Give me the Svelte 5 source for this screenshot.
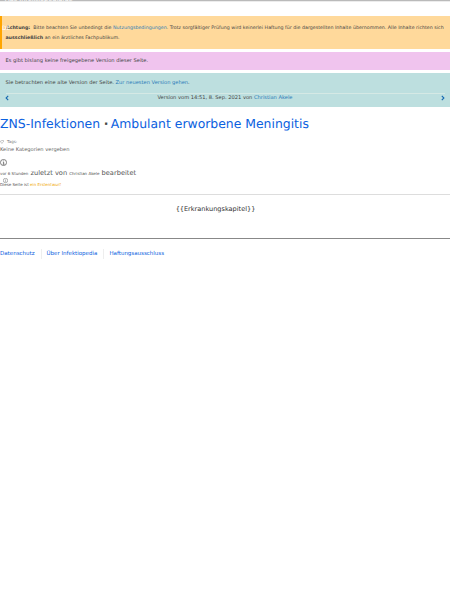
<script lang="ts">
const footerLinks = ['Datenschutz', 'Über Infektiopedia', 'Haftungsausschluss']
</script>

<div class="page">
	<div class="topbar"><span>Aus Infektiopedia.de</span></div>

	<section class="alert warning">
		<span class="ghost">DE</span>
		<p>
			<b>Achtung:</b>&nbsp; Bitte beachten Sie unbedingt die <a href="#nutzung">Nutzungsbedingungen</a>.
			Trotz sorgfältiger Prüfung wird keinerlei Haftung für die dargestellten Inhalte übernommen. Alle
			Inhalte richten sich
		</p>
		<p><b>ausschließlich</b> an ein ärztliches Fachpublikum.</p>
	</section>

	<section class="alert unreleased">Es gibt bislang keine freigegebene Version dieser Seite.</section>

	<section class="alert revision">
		<p>Sie betrachten eine alte Version der Seite. <a href="#neu">Zur neuesten Version gehen</a>.</p>
		<nav>
			<svg viewBox="0 0 4 6"><path d="M3.2 .8 1.1 3l2.1 2.2" /></svg>
			<span>Version vom 14:51, 8. Sep. 2021 von <a href="#autor">Christian Akele</a></span>
			<svg viewBox="0 0 4 6"><path d="M.8 .8 2.9 3 .8 5.2" /></svg>
		</nav>
	</section>

	<h1><a href="#zns">ZNS-Infektionen</a> <b>·</b> <a href="#meningitis">Ambulant erworbene Meningitis</a></h1>

	<div class="tags">
		<svg viewBox="0 0 5 5"><path d="M.4 1.6 2.5.6H4.3V2.3L2.2 4.3Z" /></svg>
		<span>Tags:</span>
	</div>
	<div class="categories">Keine Kategorien vergeben</div>

	<svg class="info" viewBox="0 0 16 16">
		<circle cx="8" cy="8" r="7" />
		<path d="M6.5 7h1.8v5M6.3 12h4M8 3.5v1.5" />
	</svg>

	<div class="edited">
		<small>vor 6 Stunden</small> <span>zuletzt von</span> <small>Christian Akele</small>
		<span>bearbeitet</span>
	</div>
	<div class="state">
		<svg viewBox="0 0 16 16">
			<circle cx="8" cy="8" r="7" />
			<path d="M8 7v5M8 4v1.5" />
		</svg>
		Diese Seite ist <em>ein Erstentwurf</em>
	</div>

	<main>{'{{Erkrankungskapitel}}'}</main>

	<footer>
		{#each footerLinks as link (link)}
			<a href="#{link}">{link}</a>
		{/each}
	</footer>
</div>

<style>
:global(body) {
	margin: 0;
	background: #fff;
}

.page {
	width: 450px;
	height: 600px;
	overflow: hidden;
	font: 5.13px/10px 'DejaVu Sans', sans-serif;
	text-rendering: geometricPrecision;
	color: #444;
	white-space: nowrap;
}

p,
h1 {
	margin: 0;
}

a {
	color: #2a7ab8;
	text-decoration: none;
}

svg {
	display: block;
	fill: none;
	stroke: currentColor;
}

.topbar {
	box-sizing: border-box;
	height: 2px;
	margin-bottom: 14px;
	overflow: hidden;
	background: linear-gradient(#bababa 1px, #ececec 1px);
	color: #fff;
}

.topbar span {
	display: block;
	margin-top: -6px;
	padding-left: 5px;
	font-size: 6.6px;
}

.alert {
	box-sizing: border-box;
	padding-left: 5.5px;
	margin-bottom: 3px;
}

.warning {
	position: relative;
	height: 33px;
	padding: 7.6px 0 0 4px;
	border-left: 2px solid #ffa500;
	background: #ffd99b;
	font-size: 4.76px;
}

.warning p {
	margin-left: -0.6px;
}

.warning p:first-of-type {
	margin-left: 0;
}

.ghost {
	position: absolute;
	top: 8px;
	left: 0;
	color: #fff;
	font-size: 6px;
}

.unreleased {
	height: 18px;
	line-height: 19px;
	background: #f0c4ee;
}

.revision {
	height: 34px;
	padding: 4.5px 5.5px 0;
	background: #bddfdf;
}

.revision nav {
	display: flex;
	justify-content: space-between;
	align-items: center;
	margin-top: 5.5px;
	border-top: 1px solid #d5e9e5;
	height: 8px;
}

.revision svg {
	width: 4px;
	height: 6px;
	margin-inline: -0.5px;
	color: #1468b0;
	stroke-width: 1.1;
}

h1 {
	margin-top: 8px;
	font-size: 12.42px;
	font-weight: 400;
	line-height: 18px;
}

h1 b {
	display: inline-block;
	width: 3px;
	margin-right: -0.3px;
	text-indent: -0.3px;
}

h1 a,
footer a {
	color: #0b61e0;
}

.tags {
	display: flex;
	align-items: center;
	gap: 3px;
	margin-top: 6px;
	height: 6px;
	font-size: 4px;
	color: #777;
}

.tags svg {
	width: 4px;
	height: 4px;
	stroke-width: 0.5;
}

.categories {
	height: 9px;
	line-height: 10px;
	color: #666;
}

.info {
	width: 7px;
	height: 7px;
	margin-top: 5px;
	stroke: #444;
	stroke-width: 1.5;
}

.edited {
	margin-top: 2px;
	font-size: 6.65px;
	color: #555;
}

.edited small {
	font-size: 4.03px;
}

.state {
	position: relative;
	margin-top: 1px;
	height: 14px;
	font-size: 4.03px;
	color: #555;
}

.state svg {
	position: absolute;
	top: -2px;
	left: 3px;
	width: 5px;
	height: 5px;
	stroke-width: 1.5;
}

.state em {
	font-style: normal;
	color: #f0a500;
}

main {
	box-sizing: border-box;
	height: 45px;
	padding: 9px 19px 0 0;
	border-top: 1px solid #ddd;
	border-bottom: 1px solid #888;
	font-size: 6.55px;
	text-align: center;
	color: #333;
}

footer {
	display: flex;
	margin-top: 10px;
	font-size: 5.5px;
}

footer a + a {
	margin-left: 6px;
	padding-left: 5px;
	border-left: 1px solid #eee;
}
</style>
